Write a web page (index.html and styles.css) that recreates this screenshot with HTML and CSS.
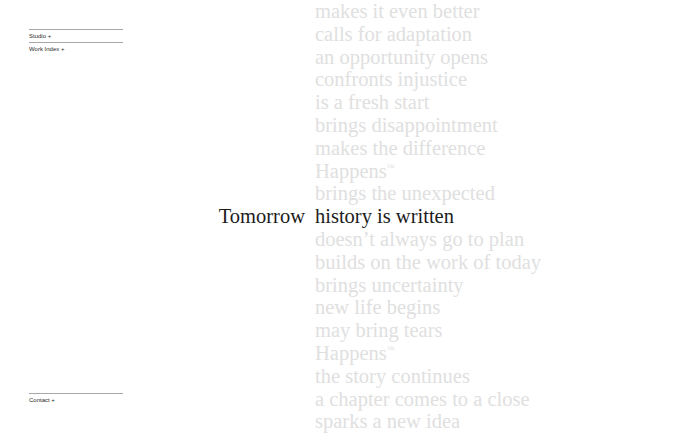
FILE: index.html
```html
<!DOCTYPE html>
<html lang="en">
<head>
<meta charset="utf-8">
<title>Tomorrow</title>
<link rel="stylesheet" href="styles.css">
</head>
<body>
<div class="page">
  <nav class="sidebar">
    <div class="nav-top">
      <a class="nav-link" href="#">Studio +</a>
      <a class="nav-link" href="#">Work Index +</a>
    </div>
    <div class="nav-bottom">
      <a class="nav-link" href="#">Contact +</a>
    </div>
  </nav>
  <main class="stage">
    <div class="lead">Tomorrow</div>
    <ul class="phrases">
      <li>makes it even better</li>
      <li>calls for adaptation</li>
      <li>an opportunity opens</li>
      <li>confronts injustice</li>
      <li>is a fresh start</li>
      <li>brings disappointment</li>
      <li>makes the difference</li>
      <li>Happens<sup>™</sup></li>
      <li>brings the unexpected</li>
      <li class="active">history is written</li>
      <li>doesn’t always go to plan</li>
      <li>builds on the work of today</li>
      <li>brings uncertainty</li>
      <li>new life begins</li>
      <li>may bring tears</li>
      <li>Happens<sup>™</sup></li>
      <li>the story continues</li>
      <li>a chapter comes to a close</li>
      <li>sparks a new idea</li>
    </ul>
  </main>
</div>
</body>
</html>
```

FILE: styles.css
```css
* { box-sizing: border-box; }
html, body { margin: 0; padding: 0; background: #fff; }
body { overflow: hidden; height: 437px; }

.page {
  display: grid;
  grid-template-columns: 29px 94px 1fr;
  height: 437px;
}

.sidebar {
  grid-column: 2;
  display: flex;
  flex-direction: column;
  justify-content: space-between;
  padding-top: 29px;
  padding-bottom: 31px;
  font-family: "Liberation Sans", Arial, sans-serif;
  font-size: 6px;
}

.nav-top, .nav-bottom { display: flex; flex-direction: column; }

.nav-link {
  display: block;
  border-top: 1px solid #a8a8a8;
  color: #2a2a2a;
  text-decoration: none;
  height: 13px;
  line-height: 10px;
  padding-top: 1px;
}

.stage {
  grid-column: 3;
  display: flex;
  align-items: flex-start;
  gap: 10px;
  margin-top: 0;
  font-family: "Liberation Serif", "Times New Roman", serif;
  font-size: 20.5px;
  line-height: 22.8px;
}

.lead {
  width: 182px;
  text-align: right;
  color: #1c1c1c;
  padding-top: calc(9 * 22.8px);
}

.phrases {
  list-style: none;
  margin: 0;
  padding: 0;
  color: #e0e0e0;
  white-space: nowrap;
}

.phrases li { height: 22.8px; }
.phrases .active { color: #1c1c1c; }

.phrases sup {
  font-size: 8px;
  vertical-align: 0;
  position: relative;
  top: -8px;
}
```
